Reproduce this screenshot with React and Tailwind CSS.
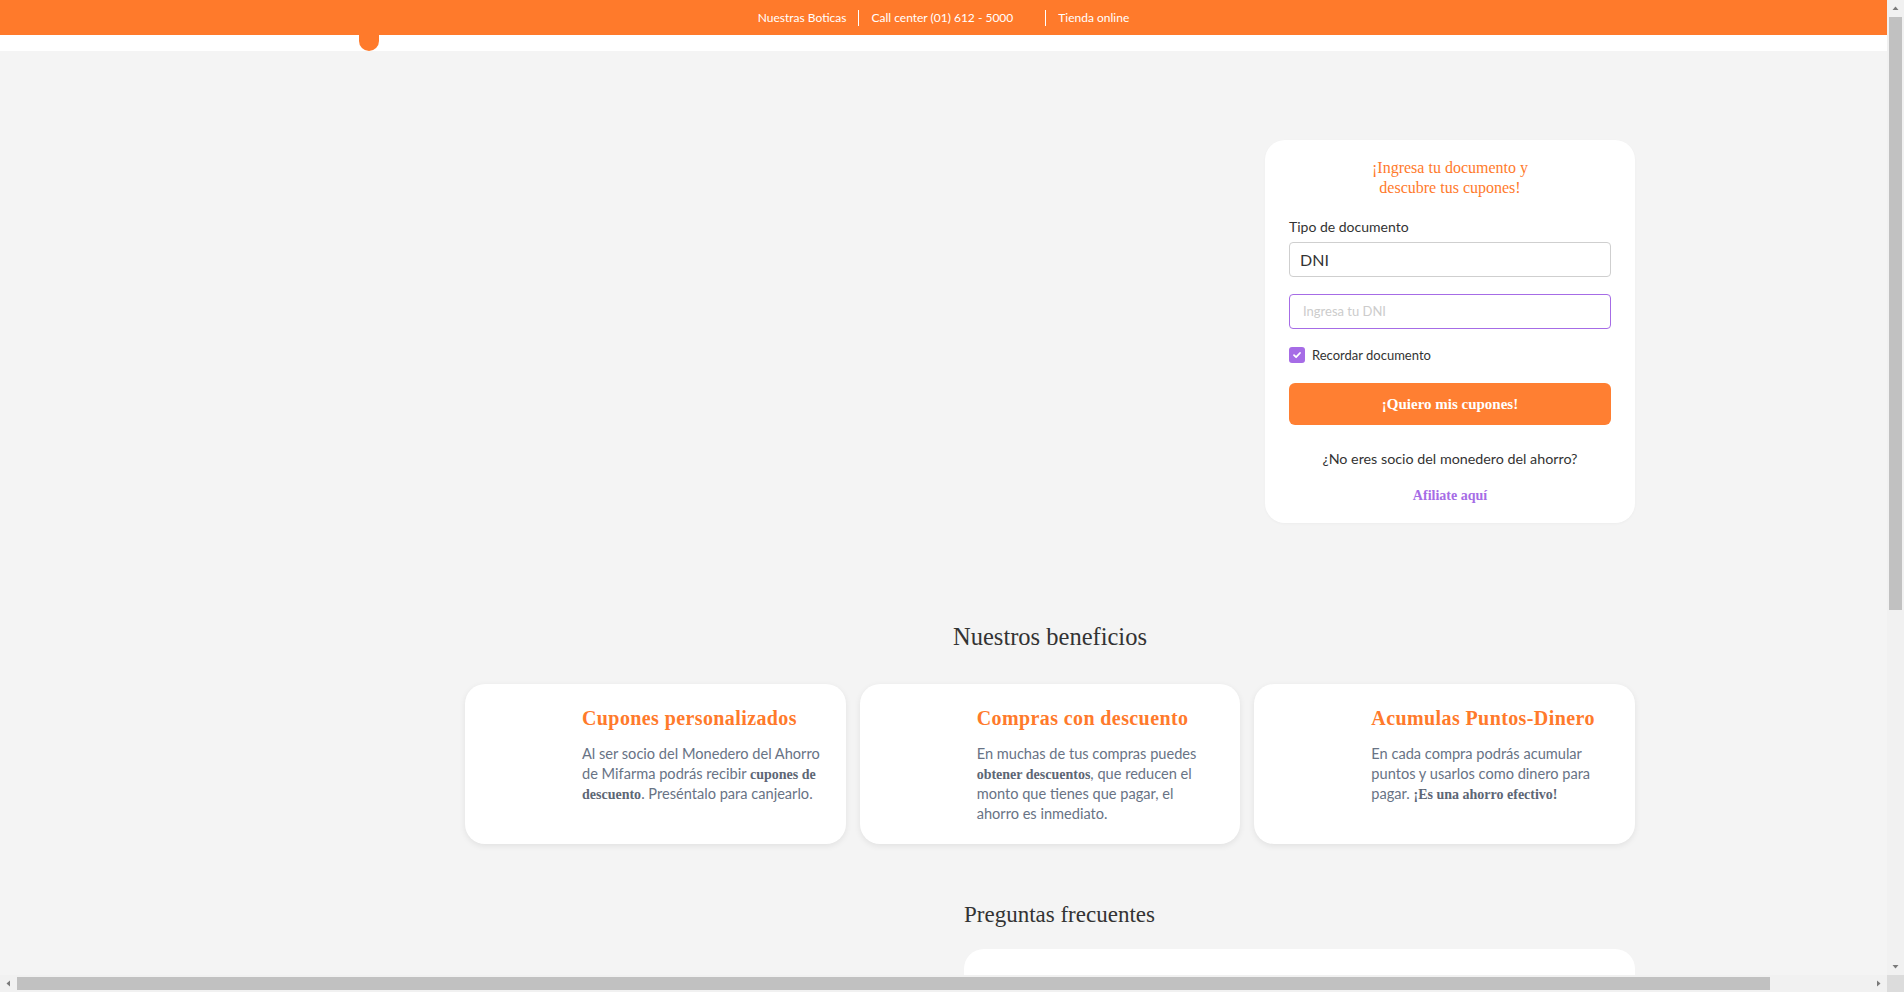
import React from "react";

const sans = "font-['Lato',sans-serif]";
const serif = "font-['Liberation_Serif','Times_New_Roman',serif]";

function Header() {
  return (
    <div className="w-full">
      <div className={`h-[35px] bg-[#ff7a2b] flex items-center justify-center text-white text-[12px] ${sans}`}>
        <span className="pr-[12px]">Nuestras Boticas</span>
        <span className="h-[16px] w-px bg-white" />
        <span className="pl-[12px] pr-[32px]">Call center (01) 612 - 5000</span>
        <span className="h-[16px] w-px bg-white" />
        <span className="pl-[12px]">Tienda online</span>
      </div>
      <div className="h-[16px] bg-white">
        <div className="ml-[359px] w-[20px] h-[16px] bg-[#ff7a2b] rounded-b-full" />
      </div>
    </div>
  );
}

function FormCard() {
  return (
    <div className="w-[370px] bg-white rounded-[20px] px-[24px] pt-[18px] pb-[17px] shadow-[0_1px_3px_rgba(0,0,0,0.03)]">
      <h2 className={`${serif} text-[16px] leading-[20px] text-[#ff7a2b] text-center`}>
        ¡Ingresa tu documento y<br />descubre tus cupones!
      </h2>
      <div className="mt-[19px] text-[14px] leading-[20px] text-[#333]">Tipo de documento</div>
      <div className="mt-[5px] h-[35px] border border-[#cfcfcf] rounded-[4px] flex items-center pl-[10px] text-[16px] text-[#333]">
        DNI
      </div>
      <div className="mt-[17px] h-[35px] border border-[#a66ce6] rounded-[4px] flex items-center pl-[13px] text-[13px] text-[#cccccc]">
        Ingresa tu DNI
      </div>
      <div className="mt-[18px] flex items-center gap-[7px]">
        <span className="w-[16px] h-[16px] rounded-[3px] bg-[#a66ce6] flex items-center justify-center">
          <svg width="10" height="10" viewBox="0 0 10 10">
            <path d="M2 5.2 L4.1 7.2 L8 3" stroke="white" strokeWidth="1.8" fill="none" strokeLinecap="round" strokeLinejoin="round" />
          </svg>
        </span>
        <span className="text-[13px] leading-[16px] text-[#333]">Recordar documento</span>
      </div>
      <button className={`mt-[20px] w-full h-[42px] rounded-[6px] bg-[#ff7f32] text-white font-bold text-[15px] ${serif}`}>
        ¡Quiero mis cupones!
      </button>
      <div className="mt-[24px] text-center text-[14.3px] leading-[20px] text-[#333]">
        ¿No eres socio del monedero del ahorro?
      </div>
      <div className={`mt-[17px] text-center text-[14px] leading-[20px] font-bold text-[#a66ce6] ${serif}`}>
        Afiliate aquí
      </div>
    </div>
  );
}

function B({ children }) {
  return <b className={`${serif} font-bold text-[14px] leading-[14px] text-[#5d6675]`}>{children}</b>;
}

function BenefitCard({ title, children }) {
  return (
    <div className="h-[160px] bg-white rounded-[20px] shadow-[0_2px_6px_rgba(0,0,0,0.08)] pl-[117px] pr-[25px] pt-[22px]">
      <h3 className={`${serif} font-bold text-[20px] leading-[24px] text-[#ff7a2b] tracking-[0.4px]`}>{title}</h3>
      <p className="mt-[14px] text-[14.6px] leading-[20px] text-[#687385]">{children}</p>
    </div>
  );
}

function Arrow({ dir }) {
  const paths = {
    up: "M1.5 6 L4.5 2.5 L7.5 6 Z",
    down: "M1.5 3 L4.5 6.5 L7.5 3 Z",
    left: "M6 1.5 L2.5 4.5 L6 7.5 Z",
    right: "M3 1.5 L6.5 4.5 L3 7.5 Z",
  };
  return (
    <div className="w-[17px] h-[17px] flex items-center justify-center shrink-0">
      <svg width="9" height="9" viewBox="0 0 9 9">
        <path d={paths[dir]} fill="#7a7a7a" />
      </svg>
    </div>
  );
}

function Page() {
  return (
    <div className={`${sans} bg-[#f4f4f4] h-[975px] overflow-hidden`}>
      <Header />
      <div className="w-[1995px] pb-[80px]">
        <div className="ml-[465px] w-[1170px]">
          <div className="pt-[89px] flex justify-end">
            <FormCard />
          </div>
          <h2 className={`${serif} mt-[100px] text-center text-[24.5px] leading-[28px] text-[#333]`}>Nuestros beneficios</h2>
          <div className="mt-[33px] grid grid-cols-3 gap-[14px]">
            <BenefitCard title="Cupones personalizados">
              Al ser socio del Monedero del Ahorro de Mifarma podrás recibir <B>cupones de descuento</B>. Preséntalo para canjearlo.
            </BenefitCard>
            <BenefitCard title="Compras con descuento">
              En muchas de tus compras puedes <B>obtener descuentos</B>, que reducen el monto que tienes que pagar, el ahorro es inmediato.
            </BenefitCard>
            <BenefitCard title="Acumulas Puntos-Dinero">
              En cada compra podrás acumular puntos y usarlos como dinero para pagar. <B>¡Es una ahorro efectivo!</B>
            </BenefitCard>
          </div>
          <div className="ml-[499px] w-[671px]">
            <h2 className={`${serif} mt-[57px] text-[23px] leading-[28px] text-[#333]`}>Preguntas frecuentes</h2>
            <div className="mt-[20px] h-[520px] bg-white rounded-[20px]" />
          </div>
        </div>
      </div>
    </div>
  );
}

export default function App() {
  return (
    <div className="w-[1904px] h-[992px] overflow-hidden grid grid-cols-[1887px_17px] grid-rows-[975px_17px]">
      <Page />
      <div className="bg-[#f1f1f1] flex flex-col">
        <Arrow dir="up" />
        <div className="mx-[2px] h-[593px] bg-[#c1c1c1]" />
        <div className="flex-1" />
        <Arrow dir="down" />
      </div>
      <div className="bg-[#f1f1f1] flex">
        <Arrow dir="left" />
        <div className="my-[2px] w-[1753px] bg-[#c1c1c1]" />
        <div className="flex-1" />
        <Arrow dir="right" />
      </div>
      <div className="bg-[#dcdcdc]" />
    </div>
  );
}
